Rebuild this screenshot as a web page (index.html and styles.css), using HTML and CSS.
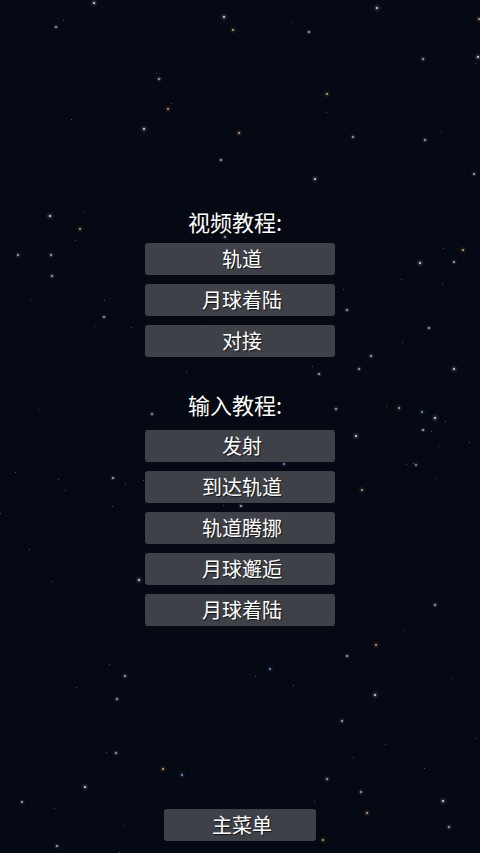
FILE: index.html
```html
<!DOCTYPE html>
<html lang="zh-CN">
<head>
<meta charset="utf-8">
<title>教程</title>
<link rel="stylesheet" href="styles.css">
</head>
<body>
<div class="screen">
  <div class="sky" id="sky"></div>
  <main class="menu">
    <section class="group group-video">
      <h2 class="group-title">视频教程:</h2>
      <div class="btn">轨道</div>
      <div class="btn">月球着陆</div>
      <div class="btn">对接</div>
    </section>
    <section class="group group-input">
      <h2 class="group-title">输入教程:</h2>
      <div class="btn">发射</div>
      <div class="btn">到达轨道</div>
      <div class="btn">轨道腾挪</div>
      <div class="btn">月球邂逅</div>
      <div class="btn">月球着陆</div>
    </section>
    <div class="btn btn-main">主菜单</div>
  </main>
</div>
<script src="script.js"></script>
</body>
</html>
```

FILE: styles.css
```css
html, body {
  margin: 0;
  padding: 0;
  background: #050913;
}
.screen {
  position: relative;
  width: 480px;
  height: 853px;
  overflow: hidden;
  background: #050913;
  font-family: "Noto Sans CJK SC", "Noto Sans", sans-serif;
  color: #fff;
}
.sky {
  position: absolute;
  inset: 0;
  pointer-events: none;
}
.star {
  position: absolute;
  width: 2px;
  height: 2px;
  border-radius: 50%;
  background: #9aa3b8;
  box-shadow: 0 0 2px 1px rgba(150, 160, 185, 0.35);
}
.star.big {
  width: 2px;
  height: 2px;
  background: #d6dbe6;
  box-shadow: 0 0 3px 1px rgba(200, 205, 220, 0.45);
}
.star.dim {
  width: 1px;
  height: 1px;
  background: #5c6478;
  box-shadow: none;
}
.star.warm {
  background: #c9a37a;
  box-shadow: 0 0 3px 1px rgba(200, 160, 110, 0.35);
}
.star.blue {
  background: #7f8fd0;
  box-shadow: 0 0 3px 1px rgba(110, 130, 210, 0.35);
}
.menu {
  position: relative;
  height: 853px;
  box-sizing: border-box;
  display: flex;
  flex-direction: column;
  align-items: center;
  padding-top: 208px;
  padding-bottom: 12px;
}
.group {
  display: flex;
  flex-direction: column;
  align-items: center;
  gap: 9px;
}
.group-input {
  margin-top: 34px;
}
.group-title {
  margin: 0;
  padding-right: 10px;
  height: 26px;
  line-height: 26px;
  font-size: 22px;
  font-weight: normal;
  text-shadow: 1px 1px 1px rgba(0, 0, 0, 0.6);
}
.group-input .group-title {
  margin-bottom: 4px;
}
.btn {
  width: 190px;
  height: 32px;
  box-sizing: border-box;
  padding-left: 4px;
  border-radius: 3px;
  background: #3e4148;
  display: flex;
  align-items: center;
  justify-content: center;
  font-size: 20px;
  line-height: 1;
  color: #fff;
  text-shadow: 1px 1px 1px rgba(0, 0, 0, 0.7);
}
.btn-main {
  margin-top: auto;
  width: 152px;
}
```

FILE: script.js
```js
var stars = [
  [93,2,'b'],[55,26,''],[63,20,'d'],[223,16,'b'],[232,29,'w'],[292,22,'d'],[308,31,''],[376,7,'b'],[478,18,'w'],[477,56,'b'],[475,63,'d'],[422,58,''],
  [156,73,'d'],[158,78,''],[161,78,'d'],[171,103,'d'],[167,108,'w'],[143,128,'b'],[71,119,'d'],[238,132,'w'],[326,93,'w'],[326,112,'d'],[352,136,''],[424,139,''],[441,131,'d'],[220,159,''],[314,178,'b'],[473,173,''],
  [49,215,'b'],[83,212,'d'],[79,228,'w'],[75,240,'d'],[17,254,''],[50,254,''],[51,275,''],[30,299,'d'],[104,300,'d'],[103,316,''],[94,326,'d'],[131,327,'d'],
  [211,237,'d'],[224,236,''],[245,237,'d'],[343,289,'d'],[346,309,''],[370,355,''],[358,368,''],[402,342,'d'],[419,262,'b'],[453,261,''],[443,248,'d'],[462,249,'w'],
  [442,284,'d'],[401,279,'d'],[428,327,''],[453,368,'b'],[318,373,''],[186,371,'d'],[38,409,'d'],[151,413,''],[386,406,'d'],[398,407,'w'],[421,411,'blue'],[312,366,'d'],[335,408,''],[318,329,''],[326,341,''],[202,327,''],[209,338,'d'],
  [15,472,'d'],[58,479,'d'],[65,490,'d'],[112,477,''],[125,484,'d'],[143,480,'d'],[160,484,''],[193,474,'blue'],[239,451,'d'],[283,463,'blue'],[266,451,'w'],[240,505,''],[223,505,'d'],
  [186,518,'d'],[152,535,'w'],[112,506,'d'],[29,549,'d'],[52,581,'d'],[138,579,'b'],[153,603,'d'],[175,582,''],[220,582,''],[228,581,'d'],[276,594,'d'],
  [434,417,'b'],[422,429,''],[431,431,'d'],[445,421,'d'],[355,435,'b'],[415,464,'blue'],[413,463,'d'],[406,464,'d'],[361,489,'w'],[469,442,'d'],[438,446,'d'],[436,478,'d'],[434,604,''],[403,630,'d'],[0,513,'d'],
  [375,644,'w'],[346,655,''],[269,668,'blue'],[255,676,'d'],[293,685,'d'],[109,664,'d'],[124,675,''],[76,687,'d'],[116,698,''],[341,720,''],[452,678,'d'],[374,694,'b'],[385,744,'d'],
  [353,757,'d'],[424,768,'d'],[475,738,'d'],[106,752,'d'],[115,752,''],[162,768,'w'],[181,774,'blue'],[84,786,'b'],[326,778,''],[360,791,''],[442,800,'b'],[314,801,'d'],[366,812,'w'],
  [21,801,''],[54,808,'d'],[123,825,'d'],[56,845,''],[310,815,''],[322,839,'w'],[448,826,''],[119,852,'d']
];
var sky = document.getElementById('sky');
var cls = {b:'big', d:'dim', w:'warm', blue:'blue'};
stars.forEach(function (s) {
  var el = document.createElement('span');
  el.className = 'star' + (s[2] ? ' ' + cls[s[2]] : '');
  el.style.left = s[0] + 'px';
  el.style.top = s[1] + 'px';
  sky.appendChild(el);
});
```
